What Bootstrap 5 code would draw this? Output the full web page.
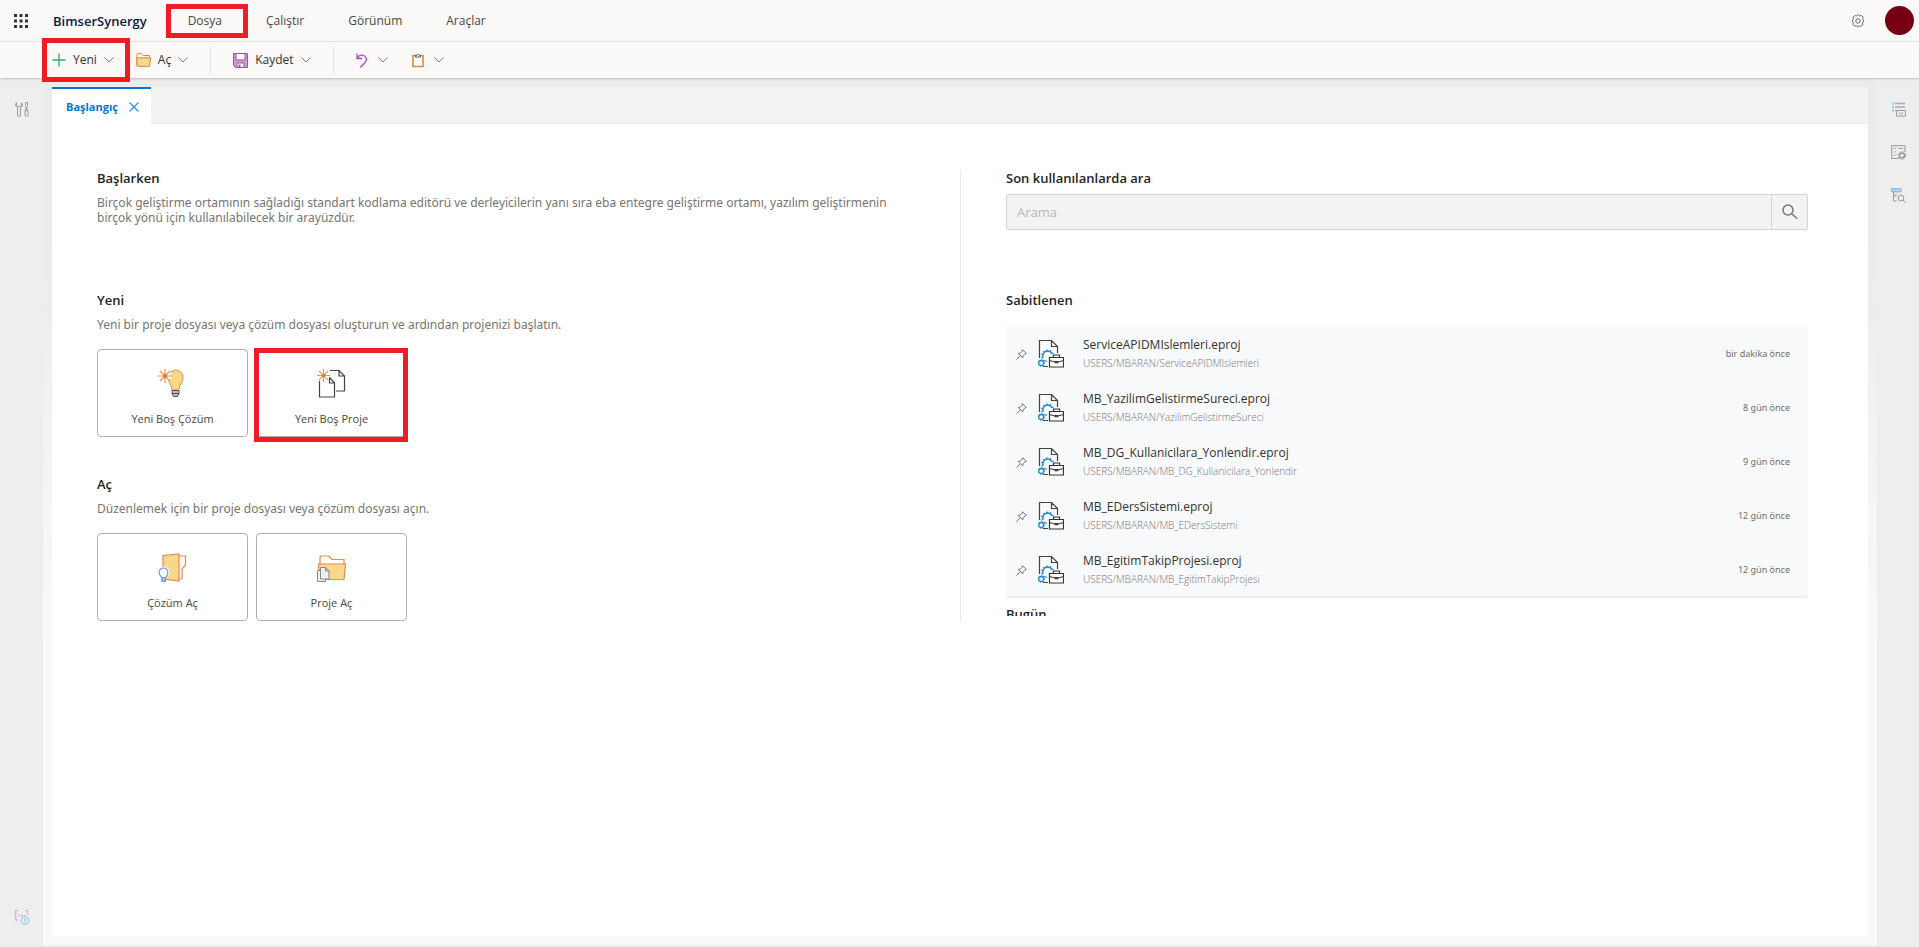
<!DOCTYPE html>
<html lang="tr">
<head>
<meta charset="utf-8">
<meta name="viewport" content="width=device-width, initial-scale=1">
<title>BimserSynergy</title>
<link href="https://cdn.jsdelivr.net/npm/bootstrap@5.3.0/dist/css/bootstrap.min.css" rel="stylesheet">
<style>
  body { font-family: "Open Sans", "Noto Sans", sans-serif; font-size: 12px; line-height: 16px; color: #323130; background: #eee; }
  svg { display: block; flex: none; overflow: visible; }
  button { color: inherit; }
  .plain { border: 0; background: none; padding: 0; position: relative; }
  .topbar { height: 42px; background: #faf9f8; border-bottom: 1px solid #e3e2e1; padding: 0 5px 0 14px; }
  .brand { font-size: 13px; font-weight: 600; color: #0b1a4a; margin-left: 25px; text-decoration: none; }
  .menu { gap: 44px; margin-left: 41px; }
  .menu a { color: #484644; text-decoration: none; }
  .avatar { width: 29px; height: 29px; background: #750014; }
  .toolbar { height: 36px; background: #faf9f8; padding-left: 52px; box-shadow: 0 1px 2px #0003; z-index: 2; }
  .tool { gap: 7px; }
  .tool-open { margin-left: 22px; }
  .tool-icon { gap: 10px; }
  .split-line { width: 1px; height: 29px; background: #e6e5e4; margin: 0 22px; }
  .flagged::after { content: ""; position: absolute; border: 5px solid #ee1c25; z-index: 3; }
  .flag-menu::after { inset: -9px -26px -9px -22px; }
  .flag-tool::after { inset: -14px -16px -14px -10px; }
  .flag-tile::after { inset: -2px -2px -6px -3px; }
  .rail { width: 43px; background: #eee; padding: 24px 0 22px; }
  .rail-right { width: 42px; gap: 28px; }
  .stage { background: linear-gradient(#ebebeb, #ebebea 20%, #f4f4f3 45%, #faf9f8 65%); padding: 9px 9px 9px; margin-bottom: 2px; }
  .tabs { background: #f3f3f3; height: 37px; border-bottom: 1px solid #ececec; }
  .tab-on { background: #fff; border-top: 2px solid #0078d4; color: #0078d4; font-weight: 700; font-size: 11px; padding: 0 12px 0 14px; gap: 11px; margin-bottom: -1px; }
  .page { background: #fff; padding-top: 46px; }
  .half { padding: 0 45px; }
  .half + .half { border-left: 1px solid #ebebeb; padding-right: 60px; }
  h2 { font-size: 13px; font-weight: 600; line-height: 16px; color: #201f1e; margin: 0; }
  .hint { font-family: "Noto Sans", sans-serif; color: #767472; line-height: 15px; margin: 9px 0 0; }
  .intro { height: 122px; }
  .tile { width: 151px; height: 88px; border: 1px solid #b0aeac; border-radius: 4px; background: #fff; color: #484644; font-size: 11px; position: relative; padding: 8px 0 0; gap: 13px; }
  .tiles { gap: 8px; margin-top: 17px; }
  .open-title { margin-top: 39px; }
  .search { height: 36px; margin-top: 8px; border: 1px solid #d6d4d3; border-radius: 2px; background: #f4f2f3; }
  .search input { border: 0; background: none; padding: 0 10px; font-size: 13px; outline: 0; min-width: 0; }
  .search input::placeholder { color: #b9b7b6; }
  .search button { width: 36px; border-left: 1px solid #d6d4d3; }
  .recent { height: 446px; overflow: hidden; }
  .recent-list { background: #f8f9fb; border-radius: 4px; box-shadow: 0 1px 3px #0002; margin: 18px 0 10px; }
  .entry { height: 54px; padding: 2px 18px 0 10px; gap: 11px; }
  .entry a { color: #323130; text-decoration: none; }
  .names { margin-left: 8px; }
  .path { font-weight: 300; font-size: 10px; color: #7a7876; margin-top: 2px; }
  .ago { font-family: "Noto Sans", sans-serif; font-size: 9px; color: #6f6d6b; }
</style>
</head>
<body class="min-vh-100 d-flex flex-column">
<svg width="0" height="0" class="position-absolute" aria-hidden="true">
  <symbol id="chev" viewBox="0 0 10 6"><path d="M.5.5 5 5 9.500.5" fill="none" stroke="#777" /></symbol>
  <symbol id="pin" viewBox="0 0 11 11"><path d="M6.500.7l3.800 3.800-1.300.4-2 2-.3 2L2.300 4.500l2-.4 2-2zM4.300 6.700.5 10.500" fill="none" stroke="#666" stroke-width=".9"/></symbol>
  <symbol id="proj" viewBox="0 0 26 28">
    <path d="M1.500 18V.5h12l6 6V13M13.500.5v6h6M5 26.500h5" fill="none" stroke="#444" stroke-width="1.200"/>
    <path d="M5.200 17.500a4.600 4.600 0 1 1 8.800-3.500" fill="none" stroke="#1f86d2" stroke-width="1.400"/>
    <path d="M4.300 18.500A5.700 5.700 0 1 1 15.200 14" fill="none" stroke="#1f86d2" stroke-width="1.500" stroke-dasharray="1.400 1.900"/>
    <circle cx="3.200" cy="23" r="2.500" fill="#f8f9fb" stroke="#1f86d2" stroke-width="1.300"/>
    <circle cx="3.200" cy="23" r="3.300" fill="none" stroke="#1f86d2" stroke-width=".9" stroke-dasharray="1.200 1.400"/>
    <path d="M5.500 20l3.500 1.500" stroke="#1f86d2" fill="none"/>
    <path d="M11.500 17.500h14v9.500h-14zM15.500 17v-2h6v2" fill="#fff" stroke="#333" stroke-width="1.200"/>
    <path d="M11.500 20.500l5.500 1.500h3l5.500-1.500M17 21.500h3v1.300h-3z" fill="none" stroke="#333"/>
  </symbol>
  <symbol id="spark" viewBox="0 0 14 14"><path d="M7 0v14M0 7h14M2 2l10 10M12 2 2 12" stroke="#f0924a" stroke-width="1.200"/><circle cx="7" cy="7" r="2" fill="#e8762b"/></symbol>
</svg>

<header class="topbar d-flex align-items-center">
  <button class="plain" aria-label="Uygulamalar">
    <svg width="14" height="14" fill="#333"><path d="M0 0h3v3H0zM5.500 0h3v3h-3zM11 0h3v3h-3zM0 5.500h3v3H0zM5.500 5.500h3v3h-3zM11 5.500h3v3h-3zM0 11h3v3H0zM5.500 11h3v3h-3zM11 11h3v3h-3z"/></svg>
  </button>
  <a class="brand" href="#">BimserSynergy</a>
  <nav class="menu d-flex" aria-label="Menü">
    <a href="#" class="position-relative flagged flag-menu">Dosya</a>
    <a href="#">Çalıştır</a>
    <a href="#">Görünüm</a>
    <a href="#">Araçlar</a>
  </nav>
  <button class="plain ms-auto me-3" aria-label="Ayarlar">
    <svg class="me-1" width="14" height="14" viewBox="0 0 14 14" fill="none" stroke="#666"><circle cx="7" cy="7" r="2.200"/><path d="M5.500 1.800Q7-.8 8.500 1.800 11.300.9 12 3q.1 1.200-.4 2.300 2.700 1.700 0 3.400.9 2.800-1.200 3.300-1 .2-1.900-.2-1.500 2.500-3 0-2.800.8-3.500-1.200-.1-1 .4-1.900-2.700-1.700 0-3.400Q1.400 2.500 3.500 1.800q1-.2 2 0z"/></svg>
  </button>
  <button class="plain avatar rounded-circle" aria-label="Profil"></button>
</header>

<div class="toolbar d-flex align-items-center position-relative" role="toolbar">
  <button class="plain tool d-flex align-items-center flagged flag-tool">
    <svg width="14" height="14"><path d="M7 .5v13M.5 7h13" stroke="#27ae60" stroke-width="1.300"/></svg>Yeni<svg width="10" height="6"><use href="#chev"/></svg>
  </button>
  <button class="plain tool tool-open d-flex align-items-center">
    <svg width="15" height="14" viewBox="0 0 15 14"><path d="M1 13V.7h4.500L7 2.500h6.500V5" fill="#fff" stroke="#e8853a"/><path d="M.5 4.800h14l-.9 8.500H1.400z" fill="#f8d98c" stroke="#e8853a"/></svg>Aç<svg width="10" height="6"><use href="#chev"/></svg>
  </button>
  <span class="split-line"></span>
  <button class="plain tool d-flex align-items-center">
    <svg width="15" height="15" viewBox="0 0 15 15"><path d="M.5.5h14v14H2.500l-2-2z" fill="#cf9fd4" stroke="#9b4fa5"/><path d="M3 .5h9V7H3z" fill="#fff" stroke="#9b4fa5"/><path d="M4 10h7v4.500H4z" fill="#fff" stroke="#9b4fa5"/><path d="M5.500 11.500h2v3h-2z" fill="#9b4fa5"/></svg>Kaydet<svg width="10" height="6"><use href="#chev"/></svg>
  </button>
  <span class="split-line"></span>
  <button class="plain tool-icon d-flex align-items-center" aria-label="Geri al">
    <svg width="12" height="15" viewBox="0 0 12 15"><path d="M1 .5v5h5M1.200 5.300C3 1.500 8 .8 10 4.500c1.500 3-.8 5.500-6 10" fill="none" stroke="#b04cc0" stroke-width="1.300"/></svg><svg width="10" height="6"><use href="#chev"/></svg>
  </button>
  <button class="plain tool-icon d-flex align-items-center ms-4" aria-label="Yapıştır">
    <svg width="12" height="14" viewBox="0 0 12 14"><path d="M1 2.500h10v11H1z" fill="#fff" stroke="#e3883a" stroke-width="1.600"/><path d="M3.500 4V2.300h1.300a1.300 1.300 0 0 1 2.400 0h1.300V4z" fill="#fff" stroke="#555"/></svg><svg width="10" height="6"><use href="#chev"/></svg>
  </button>
</div>

<div class="d-flex flex-grow-1">
  <aside class="rail d-flex flex-column align-items-center justify-content-between flex-shrink-0">
    <button class="plain" aria-label="Araç kutusu">
      <svg width="14" height="15" viewBox="0 0 14 15" fill="none" stroke="#999"><path d="M1.500.8C0 2 .2 4.500 2.500 5.500V13c0 1.800 3 1.800 3 0V5.500C7.800 4.500 8 2 6.500.8V3.500l-1 .9h-3l-1-.9zM10.500.5h2v3l-.5 1v3.500h-1V4.500l-.5-1zM10 8.500h3V13c0 1.800-3 1.800-3 0z"/></svg>
    </button>
    <button class="plain" aria-label="Değişkenler">
      <svg width="15" height="15" viewBox="0 0 15 15" fill="none" stroke="#d3b2dc"><path d="M3.500.5H1.700V4L.7 5l1 1v4h1.800M11.500.5h1.800V4l.7 1" stroke-width="1.300"/><path d="M4 5.500h7" stroke-dasharray="2 1" stroke-width="1.600"/><circle cx="11" cy="10.500" r="3.800" stroke="#8cc4e4" fill="#e6f2f9"/><path d="M10 9.300h2l-1 1.500v1.500" stroke="#8cc4e4"/></svg>
    </button>
  </aside>

  <main class="stage flex-grow-1 d-flex flex-column">
    <div class="tabs d-flex">
      <div class="tab-on d-flex align-items-center"><span>Başlangıç</span>
        <button class="plain" aria-label="Kapat"><svg width="10" height="10"><path d="M.5.5l9 9M9.500.5l-9 9" stroke="#2b8fdc" stroke-width="1.200"/></svg></button>
      </div>
    </div>
    <div class="page flex-grow-1">
      <div class="row g-0">
        <section class="col-6 half">
          <div class="intro">
            <h2>Başlarken</h2>
            <p class="hint">Birçok geliştirme ortamının sağladığı standart kodlama editörü ve derleyicilerin yanı sıra eba entegre geliştirme ortamı, yazılım geliştirmenin birçok yönü için kullanılabilecek bir arayüzdür.</p>
          </div>
          <h2>Yeni</h2>
          <p class="hint">Yeni bir proje dosyası veya çözüm dosyası oluşturun ve ardından projenizi başlatın.</p>
          <div class="tiles d-flex">
            <button class="tile d-flex flex-column align-items-center justify-content-center">
              <svg width="30" height="30" viewBox="0 0 30 30"><path d="M12 4.500C18-.5 25 3 25 9.500c0 5-3.500 6.500-4 12.500h-7c-.5-6-4-7.500-4-12.500 0-2 .8-3.800 2-5z" fill="#f8d98c" stroke="#e8884a"/><path d="M14 22.500h7v3l-1.500 3h-4l-1.500-3z" fill="#bbb" stroke="#555"/><path d="M14 25.500h7" stroke="#555"/><circle cx="7.500" cy="7.500" r="6" fill="#fff"/><use href="#spark" x="0" y="1" width="14" height="14"/></svg>
              <span>Yeni Boş Çözüm</span>
            </button>
            <button class="tile d-flex flex-column align-items-center justify-content-center flagged flag-tile">
              <svg width="30" height="30" viewBox="0 0 30 30"><path d="M13 2.500h9l5.500 5.500v15H19M22 2.500V8h5.500" fill="none" stroke="#444" stroke-width="1.200"/><path d="M2.500 13v16h15V15l-5-5.500M12.500 9.500V15h5" fill="#fff" stroke="#444" stroke-width="1.200"/><circle cx="6.500" cy="7.500" r="5" fill="#fff"/><use href="#spark" x="0" y="1" width="13" height="13"/></svg>
              <span>Yeni Boş Proje</span>
            </button>
          </div>
          <h2 class="open-title">Aç</h2>
          <p class="hint">Düzenlemek için bir proje dosyası veya çözüm dosyası açın.</p>
          <div class="tiles d-flex">
            <button class="tile d-flex flex-column align-items-center justify-content-center">
              <svg width="30" height="30" viewBox="0 0 30 30"><path d="M21 4h6.500v9L24 17v10h-3" fill="#fff" stroke="#e8884a" stroke-width="1.200"/><path d="M5 3.500 21 2v27L5 27z" fill="#f8d98c" stroke="#e8884a" stroke-width="1.200"/><circle cx="5.500" cy="20.500" r="6" fill="#fff"/><path d="M4 29.500v-4C-.5 22 1 16 5.500 16S11.500 22 7.500 25.500v4z" fill="#fff" stroke="#6b9bd2" stroke-width="1.200"/><path d="M4 25.500h3.500v4H4z" fill="#9bbfe2" stroke="#6b9bd2"/></svg>
              <span>Çözüm Aç</span>
            </button>
            <button class="tile d-flex flex-column align-items-center justify-content-center">
              <svg width="30" height="30" viewBox="0 0 30 30"><path d="M3 12V5l1-1h8l3 3.500h12V12" fill="#fff" stroke="#e8884a" stroke-width="1.200"/><path d="M1.500 12h27L27 27.500H2.500z" fill="#f8d98c" stroke="#e8884a" stroke-width="1.200"/><path d="M.5 18.500h8v11h-8z" fill="#eee" stroke="#888"/><path d="M3.500 15.500h5l3.500 3.500v8H3.500zM8.500 15.500V19H12" fill="#eee" stroke="#888"/></svg>
              <span>Proje Aç</span>
            </button>
          </div>
        </section>

        <section class="col-6 half">
          <div class="recent">
            <div class="intro">
              <h2><label for="q">Son kullanılanlarda ara</label></h2>
              <div class="search d-flex">
                <input id="q" class="flex-grow-1" type="text" placeholder="Arama">
                <button class="plain d-flex align-items-center justify-content-center" aria-label="Ara"><svg width="16" height="16" viewBox="0 0 16 16" fill="none" stroke="#777" stroke-width="1.500"><circle cx="6" cy="6" r="5"/><path d="M9.700 9.700l5.500 5"/></svg></button>
              </div>
            </div>
            <h2>Sabitlenen</h2>
            <ul class="recent-list list-unstyled">
              <li class="entry d-flex align-items-center"><svg width="11" height="11"><use href="#pin"/></svg><svg width="26" height="28"><use href="#proj"/></svg><div class="names"><a href="#">ServiceAPIDMIslemleri.eproj</a><div class="path">USERS/MBARAN/ServiceAPIDMIslemleri</div></div><span class="ago ms-auto">bir dakika önce</span></li>
              <li class="entry d-flex align-items-center"><svg width="11" height="11"><use href="#pin"/></svg><svg width="26" height="28"><use href="#proj"/></svg><div class="names"><a href="#">MB_YazilimGelistirmeSureci.eproj</a><div class="path">USERS/MBARAN/YazilimGelistirmeSureci</div></div><span class="ago ms-auto">8 gün önce</span></li>
              <li class="entry d-flex align-items-center"><svg width="11" height="11"><use href="#pin"/></svg><svg width="26" height="28"><use href="#proj"/></svg><div class="names"><a href="#">MB_DG_Kullanicilara_Yonlendir.eproj</a><div class="path">USERS/MBARAN/MB_DG_Kullanicilara_Yonlendir</div></div><span class="ago ms-auto">9 gün önce</span></li>
              <li class="entry d-flex align-items-center"><svg width="11" height="11"><use href="#pin"/></svg><svg width="26" height="28"><use href="#proj"/></svg><div class="names"><a href="#">MB_EDersSistemi.eproj</a><div class="path">USERS/MBARAN/MB_EDersSistemi</div></div><span class="ago ms-auto">12 gün önce</span></li>
              <li class="entry d-flex align-items-center"><svg width="11" height="11"><use href="#pin"/></svg><svg width="26" height="28"><use href="#proj"/></svg><div class="names"><a href="#">MB_EgitimTakipProjesi.eproj</a><div class="path">USERS/MBARAN/MB_EgitimTakipProjesi</div></div><span class="ago ms-auto">12 gün önce</span></li>
            </ul>
            <h2>Bugün</h2>
          </div>
        </section>
      </div>
    </div>
  </main>

  <aside class="rail rail-right d-flex flex-column align-items-center flex-shrink-0">
    <button class="plain" aria-label="Özellikler"><svg width="15" height="15" viewBox="0 0 15 15" fill="none" stroke="#aaa"><path d="M4 1.500h10M4 5h10M4 8.500h1" stroke-width="1.300"/><path d="M1 1.500h2M1 5h2M1 8.500h2" stroke="#9ecbe8" stroke-width="2.400"/><path d="M5.500 8.500h9v5.500h-9zM8 10.500l2 1.500 2-1.500" stroke="#999"/></svg></button>
    <button class="plain" aria-label="Görevler"><svg width="15" height="15" viewBox="0 0 15 15" fill="none" stroke="#999"><path d="M14 7V.7H.7v12.800H8M7.500 3.500H12"/><path d="M2.500 3l1 1L5.500 2M2.500 6.500l1 1 2-2M2.500 10l1 1 2-2" stroke="#7bbbe2"/><circle cx="11" cy="10.500" r="2.500" stroke-width="1.500"/><circle cx="11" cy="10.500" r="3.800" stroke-dasharray="1.500 1.500"/></svg></button>
    <button class="plain" aria-label="Nesne gezgini"><svg width="15" height="15" viewBox="0 0 15 15" fill="none" stroke="#999"><path d="M.6.8h9.500v3H.6z" fill="#b5daf0" stroke="#7bb0d4"/><path d="M2.500 4v9h3M2.500 8h3"/><circle cx="10" cy="10" r="2.900"/><path d="M12 12l2.600 2.700M4 6.500h1.500"/></svg></button>
  </aside>
</div>
<script src="https://cdn.jsdelivr.net/npm/bootstrap@5.3.0/dist/js/bootstrap.bundle.min.js"></script>
</body>
</html>
